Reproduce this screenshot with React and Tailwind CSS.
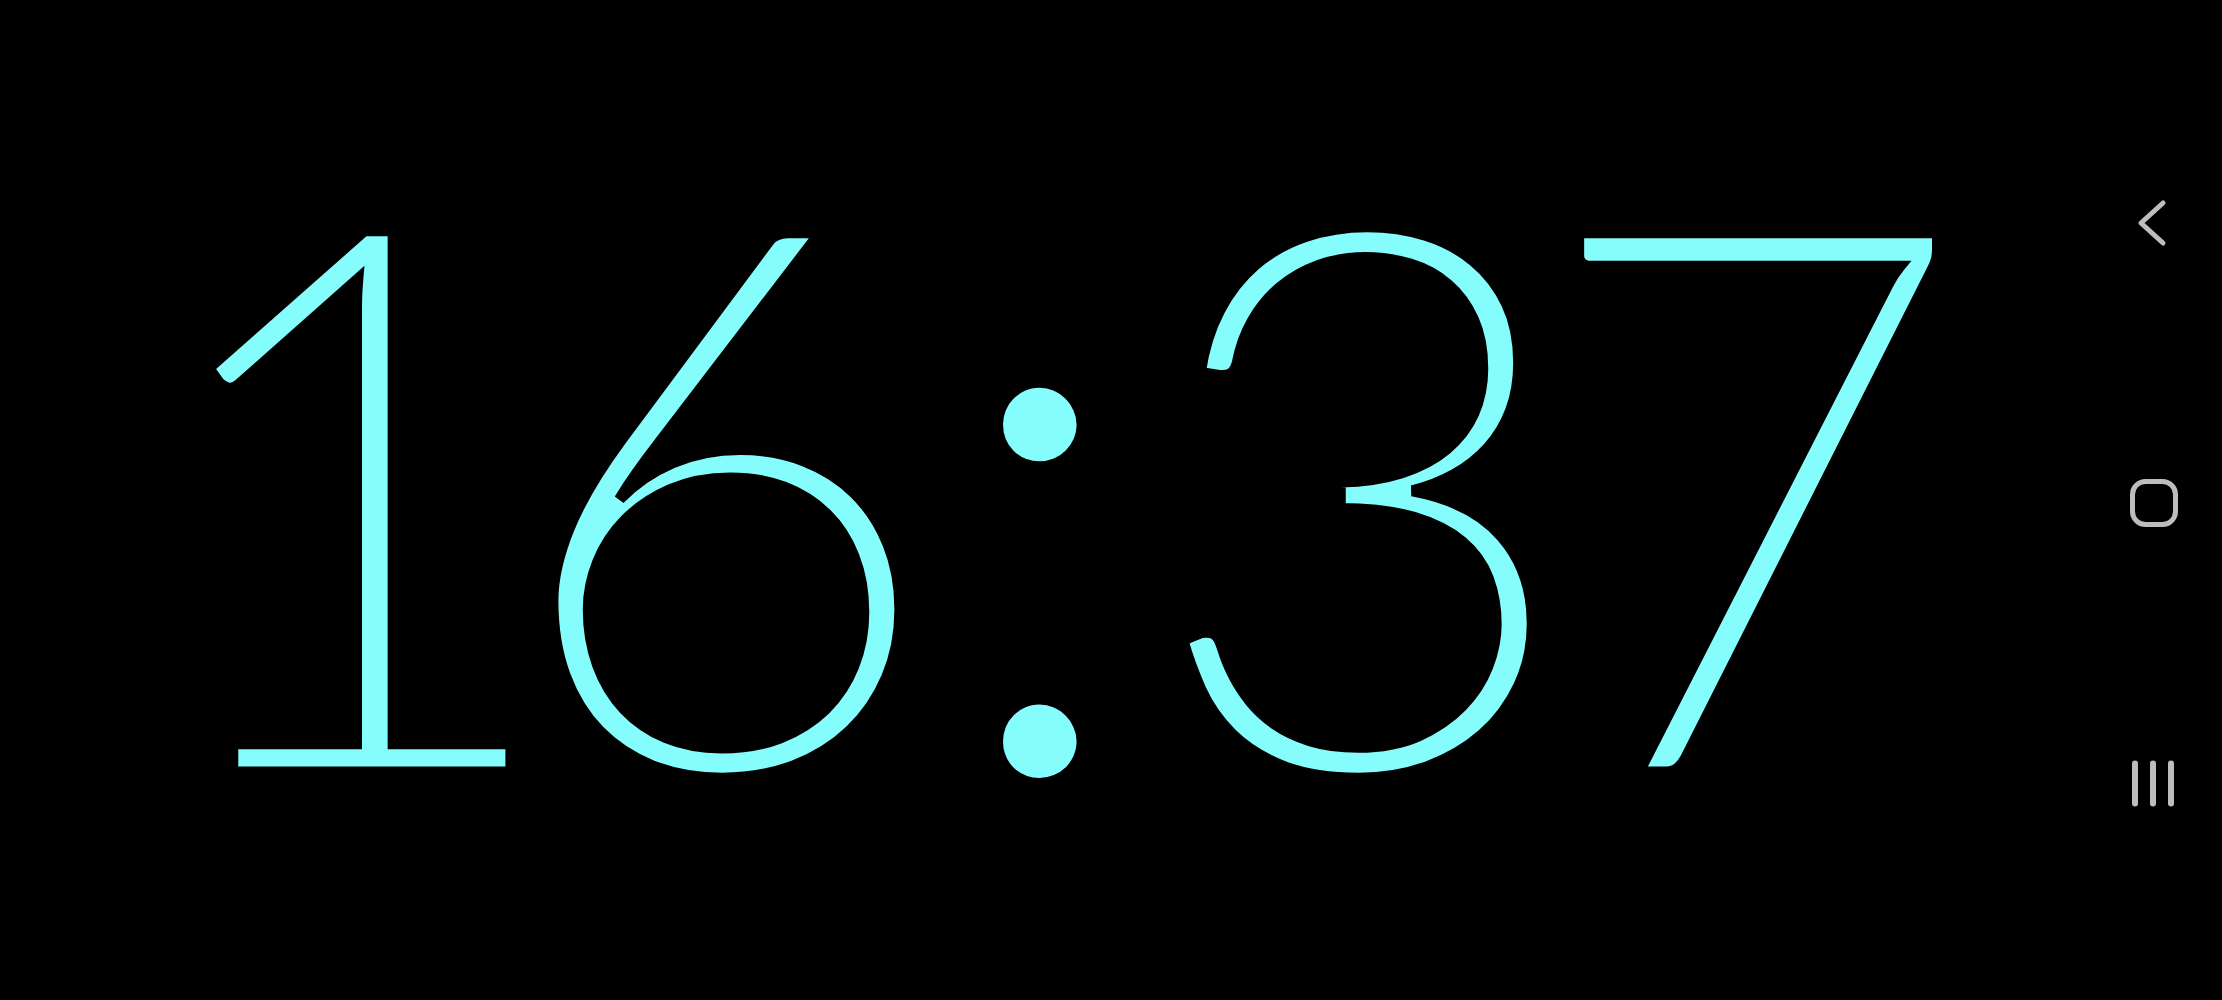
export default function App() {
  const digit = "flex shrink-0 justify-center leading-none [-webkit-text-stroke:11px_black]";
  return (
    <div className="flex h-[1000px] w-full overflow-hidden bg-black">
      {/* clock */}
      <div className="flex-1 pt-[96px]">
        <div
          className="flex items-baseline pl-[126px] text-[762px] font-light text-[#86fdfd]"
          style={{ fontFamily: "Lato, 'Noto Sans', sans-serif" }}
        >
          <span className={`${digit} w-[452px]`}>1</span>
          <span className={`${digit} w-[288px]`}>6</span>
          <span className="flex w-[348px] shrink-0 justify-center text-[795px] leading-[0.85]">:</span>
          <span className={`${digit} w-[296px]`}>3</span>
          <span className={`${digit} w-[484px]`}>7</span>
        </div>
      </div>

      {/* nav bar */}
      <div className="flex w-[134px] flex-col items-center justify-center gap-[220px] pt-[6px] pr-[2px]">
        <svg width="60" height="60" viewBox="0 0 60 60" fill="none">
          <path
            d="M39 10 L17 30 L39 50"
            stroke="#bdbdbd"
            strokeWidth="5"
            strokeLinecap="round"
            strokeLinejoin="round"
          />
        </svg>
        <svg width="60" height="60" viewBox="0 0 60 60" fill="none">
          <rect x="8.5" y="8.5" width="43" height="43" rx="13" stroke="#bdbdbd" strokeWidth="5" />
        </svg>
        <svg width="60" height="60" viewBox="0 0 60 60" fill="none">
          <path
            d="M11 10.5 V50.5 M29 10.5 V50.5 M47 10.5 V50.5"
            stroke="#bdbdbd"
            strokeWidth="6"
            strokeLinecap="round"
          />
        </svg>
      </div>
    </div>
  );
}
